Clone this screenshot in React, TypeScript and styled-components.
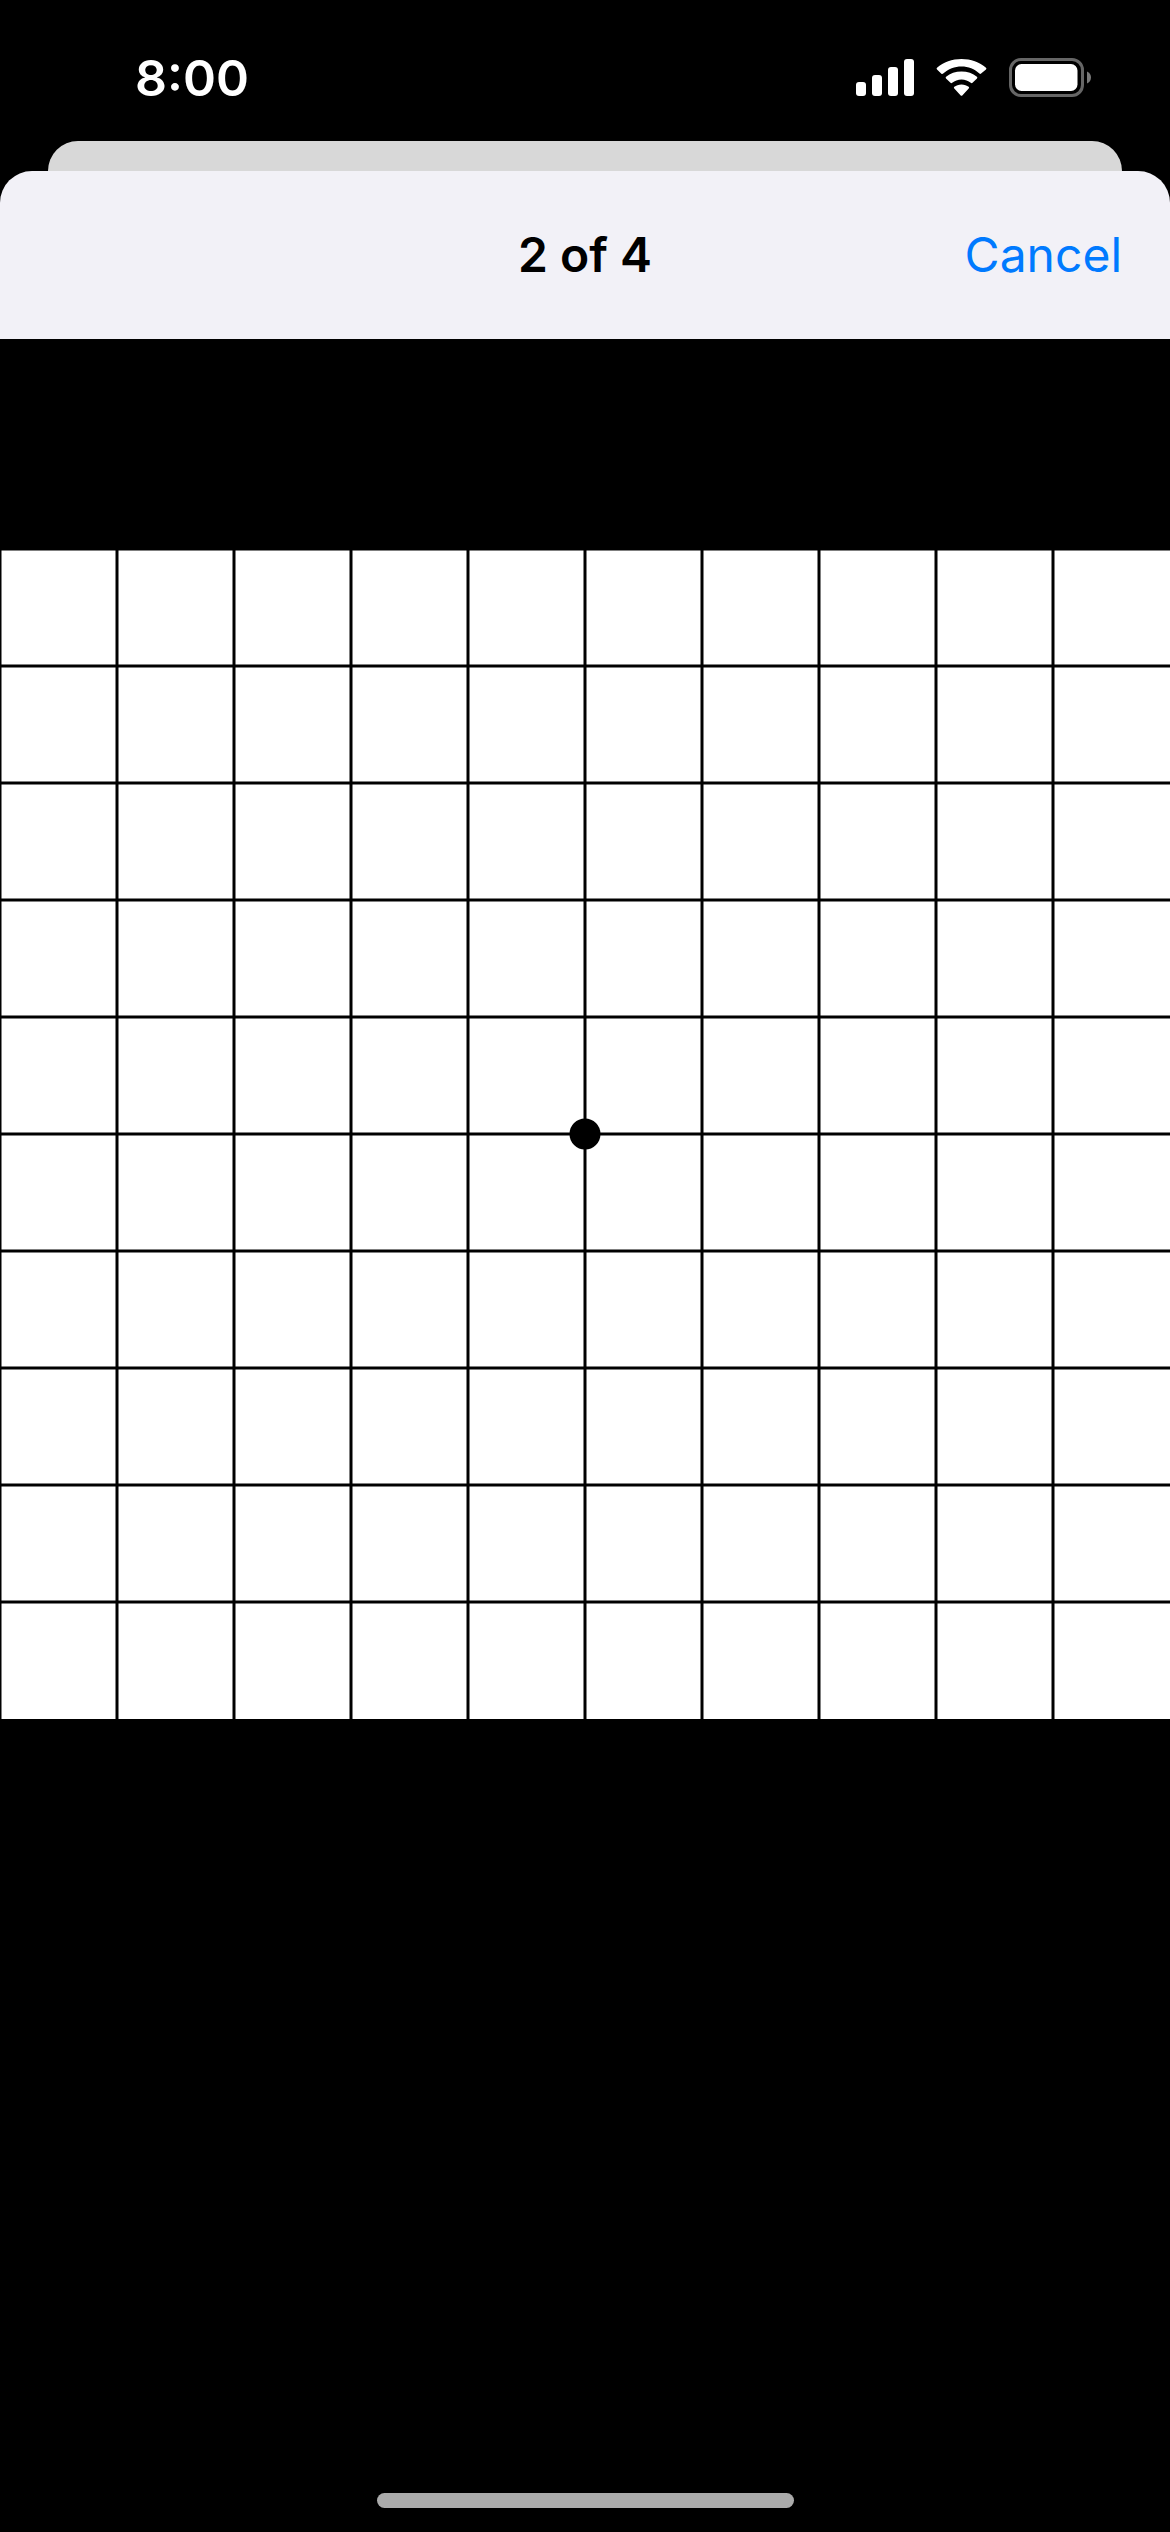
import React from "react";
import styled, { createGlobalStyle } from "styled-components";

const GlobalStyle = createGlobalStyle`
  *, *::before, *::after {
    box-sizing: border-box;
  }

  body {
    margin: 0;
    background: #000;
    font-family: Inter, "Liberation Sans", sans-serif;
  }
`;

const Screen = styled.div`
  display: flex;
  flex-direction: column;
  min-height: 100vh;
  background: #000;
`;

const StatusBar = styled.div`
  display: flex;
  align-items: center;
  justify-content: space-between;
  height: 141px;
  padding: 14px 78px 0 135px;
  color: #fff;
`;

const Time = styled.time`
  font-size: 50px;
  font-weight: 600;
  line-height: 60px;
`;

const StatusIcons = styled.div`
  display: flex;
  align-items: center;
  gap: 22px;

  svg {
    display: block;
  }
`;

const BackSheet = styled.div`
  height: 30px;
  margin: 0 48px;
  border-radius: 30px 30px 0 0;
  background: #d8d8d8;
`;

const Header = styled.header`
  display: grid;
  grid-template-columns: 1fr auto 1fr;
  align-items: center;
  height: 168px;
  padding: 0 48px;
  border-radius: 32px 32px 0 0;
  background: #f2f1f7;
`;

const Title = styled.h1`
  grid-column: 2;
  margin: 0;
  color: #000;
  font-size: 48px;
  font-weight: 600;
  line-height: 60px;
`;

const CancelButton = styled.button`
  justify-self: end;
  padding: 0;
  border: 0;
  background: none;
  color: #007aff;
  font-family: inherit;
  font-size: 48px;
  font-weight: 400;
  line-height: 60px;
  cursor: pointer;
`;

const Content = styled.main`
  flex: 1;
  padding-top: 210px;
`;

const Chart = styled.svg`
  display: block;
  width: 100%;
  background: #fff;
`;

const HomeArea = styled.footer`
  display: flex;
  justify-content: center;
  padding: 24px 0;
`;

const HomeIndicator = styled.div`
  width: 417px;
  height: 15px;
  border-radius: 8px;
  background: #ababab;
`;

function SignalIcon() {
  return (
    <svg width="58" height="37" viewBox="0 0 58 37" fill="currentColor" aria-hidden="true">
      <rect x="0" y="23" width="10" height="14" rx="3" />
      <rect x="16" y="16" width="10" height="21" rx="3" />
      <rect x="32" y="8" width="10" height="29" rx="3" />
      <rect x="48" y="0" width="10" height="37" rx="3" />
    </svg>
  );
}

function WifiIcon() {
  return (
    <svg width="51" height="37" viewBox="0 0.5 51 37" fill="currentColor" aria-hidden="true">
      <path d="M25.5 8.1C32.3 8.1 38.6 10.7 43.4 15.1Q44.3 15.9 45.1 15L50 10.9Q50.9 10.2 50 9.3C43.5 3.5 34.8 .5 25.5 .5S7.5 3.5 1 9.3Q.1 10.2 1 10.9L5.4 15.2Q6.3 15.9 7.2 15.1C12.3 10.7 18.7 8.1 25.5 8.1Z" />
      <path d="M25.5 20.9C29.1 20.9 32.3 22.2 34.8 24.3Q35.7 25 36.5 24.2L41 19.9Q41.8 19.1 40.9 18.3C36.8 14.9 31.5 13 25.5 13S14.2 14.9 10.1 18.3Q9.2 19.1 10 19.9L14.5 24.2Q15.3 25 16.2 24.3C18.7 22.2 21.9 20.9 25.5 20.9Z" />
      <path d="M25.5 26C22.6 26 20.2 27 18.3 28.3Q17.5 29.1 18.3 29.9L24.7 36.9Q25.5 37.7 26.3 36.9L32.7 29.9Q33.5 29.1 32.7 28.3C30.8 27 28.4 26 25.5 26Z" />
    </svg>
  );
}

function BatteryIcon() {
  return (
    <svg width="83" height="39" viewBox="0 0 83 39" fill="none" aria-hidden="true">
      <rect x="1.5" y="1.5" width="72" height="36" rx="10.5" stroke="#666" strokeWidth="3" />
      <rect x="6" y="6" width="62.5" height="27" rx="6.5" fill="currentColor" />
      <path d="M78 13.5C80.4 14.5 82 16.8 82 19.5S80.4 24.5 78 25.5Z" fill="#7a7a7a" />
    </svg>
  );
}

const CELLS = 10;
const CELL_SIZE = 117;
const CHART_SIZE = CELLS * CELL_SIZE;

function AmslerGrid() {
  const offsets = Array.from({ length: CELLS }, (_, i) => i * CELL_SIZE);

  return (
    <Chart viewBox={`0 0 ${CHART_SIZE} ${CHART_SIZE}`} role="img">
      <g stroke="#000" strokeWidth="3">
        {offsets.map((p) => (
          <React.Fragment key={p}>
            <line x1={p} y1={0} x2={p} y2={CHART_SIZE} />
            <line x1={0} y1={p} x2={CHART_SIZE} y2={p} />
          </React.Fragment>
        ))}
      </g>
      <circle cx={CHART_SIZE / 2} cy={CHART_SIZE / 2} r="15.5" fill="#000" />
    </Chart>
  );
}

export default function App() {
  return (
    <>
      <GlobalStyle />
      <Screen>
        <StatusBar>
          <Time>8:00</Time>
          <StatusIcons>
            <SignalIcon />
            <WifiIcon />
            <BatteryIcon />
          </StatusIcons>
        </StatusBar>
        <BackSheet />
        <Header>
          <Title>2 of 4</Title>
          <CancelButton type="button">Cancel</CancelButton>
        </Header>
        <Content>
          <AmslerGrid />
        </Content>
        <HomeArea>
          <HomeIndicator />
        </HomeArea>
      </Screen>
    </>
  );
}
